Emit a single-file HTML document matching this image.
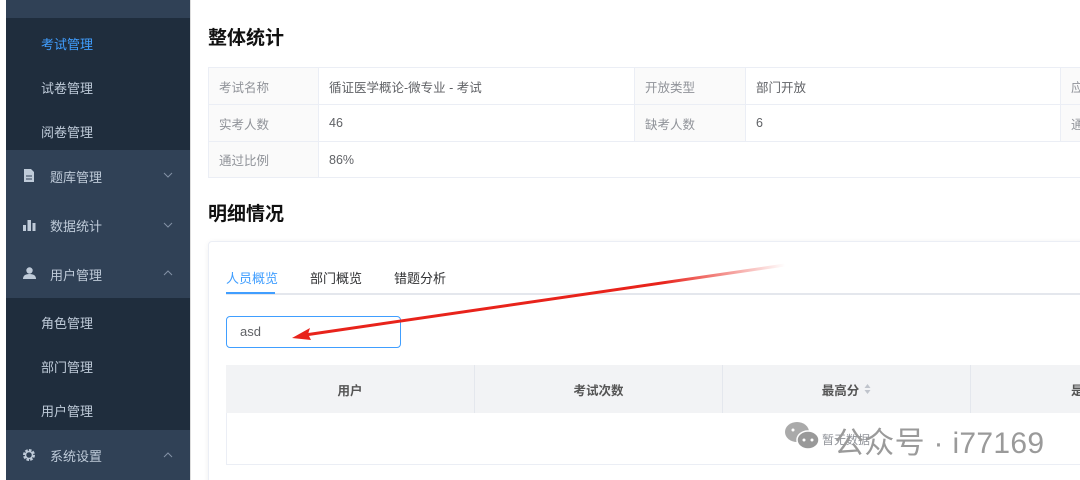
<!DOCTYPE html>
<html><head><meta charset="utf-8"><style>
*{margin:0;padding:0;box-sizing:border-box}
html,body{width:1080px;height:480px;overflow:hidden}
body{background:#fff;font-family:"Liberation Sans","Noto Sans CJK SC",sans-serif;position:relative}
.abs{position:absolute}
.sb{left:0;top:0;width:190px;height:480px;background:#fff}
.sb div{position:absolute;left:6px;width:184px;color:#bfcbd9;font-size:13px}
.lite{background:#304156}
.dark{background:#1f2d3d}
.sub{left:6px;width:184px;padding-left:35px;position:absolute;color:#bfcbd9;font-size:13px}
.arr{position:absolute;left:163px}
h2{position:absolute;font-size:19px;font-weight:bold;color:#111}
.cell{position:absolute;font-size:12.5px;color:#606266;padding-left:10px;border:1px solid #ebeef5;display:flex;align-items:center}
.lab{background:#fafafa;color:#909399}
.th{position:absolute;top:365px;height:48px;background:#f2f3f5;border-right:1px solid #e4e7ed;font-size:12.5px;font-weight:bold;color:#555;display:flex;align-items:center;justify-content:center}
</style></head><body>
<div class="sb abs">
<div class="lite" style="top:0;height:18px"></div>
<div class="dark" style="top:18px;height:132px"></div>
<div class="sub" style="top:34px;color:#409eff">考试管理</div>
<div class="sub" style="top:78px">试卷管理</div>
<div class="sub" style="top:122px">阅卷管理</div>
<div class="lite" style="top:150px;height:148px"></div>
<svg class="abs" style="left:23px;top:169px" width="12" height="13"><path d="M1 0h7l3 3v10H1z" fill="#bfcbd9"/><path d="M3 7h6M3 10h6" stroke="#304156"/></svg>
<div class="sub" style="top:167px;padding-left:44px">题库管理</div>
<svg class="arr" style="top:172px" width="10" height="6"><path d="M1 1l4 4 4-4" fill="none" stroke="#8391a5"/></svg>
<svg class="abs" style="left:23px;top:219px" width="13" height="12"><rect x="0" y="6" width="3" height="6" fill="#bfcbd9"/><rect x="4.5" y="1" width="3.5" height="11" fill="#bfcbd9"/><rect x="9.5" y="4" width="3" height="8" fill="#bfcbd9"/></svg>
<div class="sub" style="top:216px;padding-left:44px">数据统计</div>
<svg class="arr" style="top:222px" width="10" height="6"><path d="M1 1l4 4 4-4" fill="none" stroke="#8391a5"/></svg>
<svg class="abs" style="left:23px;top:267px" width="13" height="12"><circle cx="6.5" cy="3.5" r="3.2" fill="#bfcbd9"/><path d="M0 12q0-5 6.5-5t6.5 5z" fill="#bfcbd9"/></svg>
<div class="sub" style="top:265px;padding-left:44px">用户管理</div>
<svg class="arr" style="top:270px" width="10" height="6"><path d="M1 5l4-4 4 4" fill="none" stroke="#8391a5"/></svg>
<div class="dark" style="top:298px;height:132px"></div>
<div class="sub" style="top:313px">角色管理</div>
<div class="sub" style="top:357px">部门管理</div>
<div class="sub" style="top:401px">用户管理</div>
<div class="lite" style="top:430px;height:50px"></div>
<svg class="abs" style="left:23px;top:449px" width="12" height="12"><circle cx="6" cy="6" r="4.5" fill="none" stroke="#bfcbd9" stroke-width="3" stroke-dasharray="2.4 1.1"/><circle cx="6" cy="6" r="3.5" fill="none" stroke="#bfcbd9" stroke-width="1.5"/></svg>
<div class="sub" style="top:446px;padding-left:44px">系统设置</div>
<svg class="arr" style="top:452px" width="10" height="6"><path d="M1 5l4-4 4 4" fill="none" stroke="#8391a5"/></svg>
</div>
<div class="abs" style="left:190px;top:0;width:1px;height:480px;background:#ddd"></div>

<h2 style="left:208px;top:23px">整体统计</h2>
<div class="cell lab" style="left:208px;top:67px;width:111px;height:38px">考试名称</div>
<div class="cell" style="left:318px;top:67px;width:317px;height:38px">循证医学概论-微专业 - 考试</div>
<div class="cell lab" style="left:634px;top:67px;width:112px;height:38px">开放类型</div>
<div class="cell" style="left:745px;top:67px;width:316px;height:38px">部门开放</div>
<div class="cell lab" style="left:1060px;top:67px;width:40px;height:38px">应</div>
<div class="cell lab" style="left:208px;top:104px;width:111px;height:38px">实考人数</div>
<div class="cell" style="left:318px;top:104px;width:317px;height:38px">46</div>
<div class="cell lab" style="left:634px;top:104px;width:112px;height:38px">缺考人数</div>
<div class="cell" style="left:745px;top:104px;width:316px;height:38px">6</div>
<div class="cell lab" style="left:1060px;top:104px;width:40px;height:38px">通</div>
<div class="cell lab" style="left:208px;top:141px;width:111px;height:37px">通过比例</div>
<div class="cell" style="left:318px;top:141px;width:800px;height:37px">86%</div>

<h2 style="left:208px;top:199px">明细情况</h2>
<div class="abs" style="left:208px;top:241px;width:900px;height:260px;border:1px solid #ebeef5;border-radius:4px;box-shadow:0 1px 6px rgba(0,0,0,.06)"></div>
<div class="abs" style="left:226px;top:268px;font-size:13px;color:#409eff">人员概览</div>
<div class="abs" style="left:310px;top:268px;font-size:13px;color:#303133">部门概览</div>
<div class="abs" style="left:394px;top:268px;font-size:13px;color:#303133">错题分析</div>
<div class="abs" style="left:226px;top:293px;width:860px;height:2px;background:#e4e7ed"></div>
<div class="abs" style="left:226px;top:292px;width:49px;height:2px;background:#409eff"></div>
<div class="abs" style="left:226px;top:316px;width:175px;height:32px;border:1px solid #409eff;border-radius:4px;font-size:13px;color:#606266;padding:7px 13px">asd</div>
<div class="th" style="left:226px;width:249px">用户</div>
<div class="th" style="left:475px;width:248px">考试次数</div>
<div class="th" style="left:723px;width:248px">最高分<svg style="margin-left:5px" width="7" height="12"><path d="M0.5 5l3-4 3 4zM0.5 7l3 4 3-4z" fill="#c0c4cc"/></svg></div>
<div class="th" style="left:971px;width:140px;justify-content:flex-start;padding-left:100px">是</div>
<div class="abs" style="left:226px;top:413px;width:860px;height:52px;border:1px solid #ebeef5;border-top:none"></div>
<div class="abs" style="left:822px;top:431px;font-size:12px;color:#909399">暂无数据</div>
<svg class="abs" style="left:783px;top:419px" width="40" height="36"><ellipse cx="14" cy="13" rx="12" ry="10" fill="#aaa"/><ellipse cx="25" cy="21" rx="11" ry="9" fill="#999" stroke="#fff" stroke-width="1.5"/><circle cx="21" cy="21" r="1.5" fill="#fff"/><circle cx="29" cy="21" r="1.5" fill="#fff"/><circle cx="10" cy="11" r="1.5" fill="#fff"/></svg>
<div class="abs" style="left:834px;top:418px;font-size:30px;color:#9a9a9a;letter-spacing:0.3px">公众号 · i77169</div>
<svg class="abs" style="left:0;top:0" width="1080" height="480"><defs><linearGradient id="g" x1="295" y1="337" x2="785" y2="265" gradientUnits="userSpaceOnUse"><stop offset="0" stop-color="#e8231b"/><stop offset=".75" stop-color="#e8231b"/><stop offset="1" stop-color="#e8231b" stop-opacity="0"/></linearGradient></defs><path d="M785 265L305 335" stroke="url(#g)" stroke-width="3"/><path d="M292 338l18-10-2 6 3 6z" fill="#e8231b"/></svg>
</body></html>
